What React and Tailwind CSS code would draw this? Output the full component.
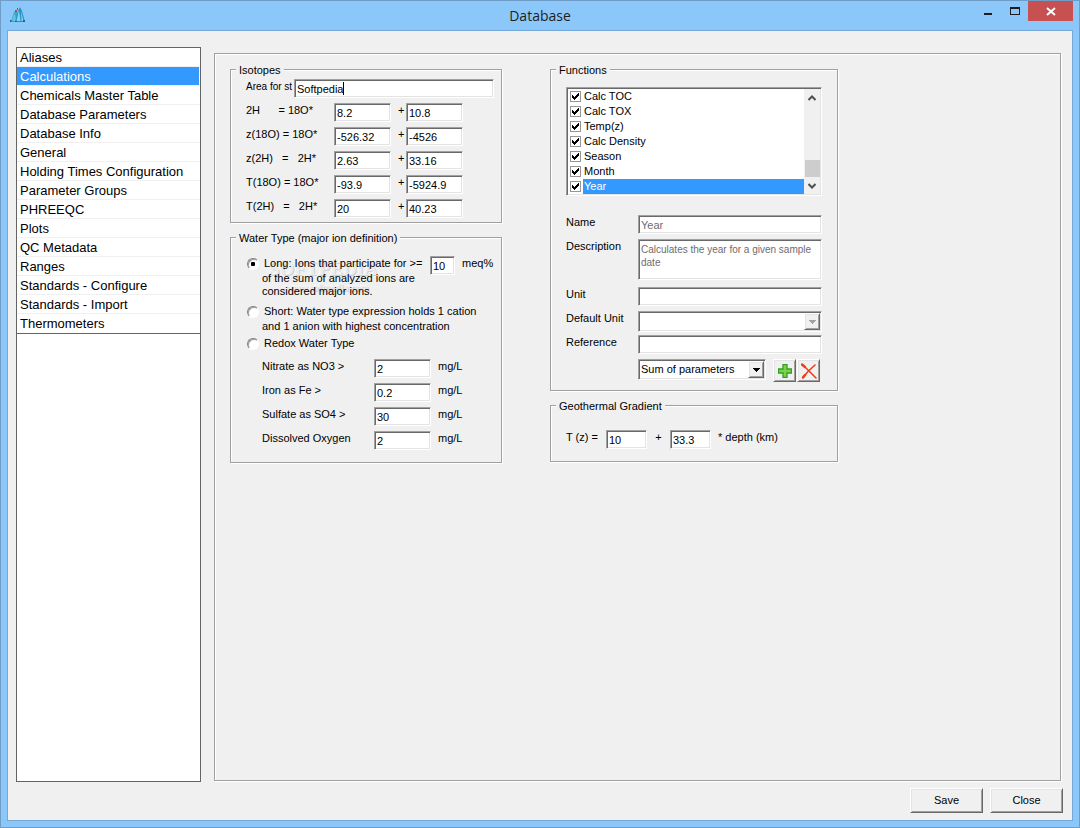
import { useState } from 'react';

const SUNKEN =
  'border border-t-[#a0a0a0] border-l-[#a0a0a0] border-r-white border-b-white bg-white shadow-[inset_1px_1px_0_#696969,inset_-1px_-1px_0_#e3e3e3]';
const RAISED =
  'border border-t-white border-l-white border-r-[#696969] border-b-[#696969] bg-[#f0f0f0] shadow-[inset_1px_1px_0_#e3e3e3,inset_-1px_-1px_0_#a0a0a0]';

const sections = [
  'Aliases',
  'Calculations',
  'Chemicals Master Table',
  'Database Parameters',
  'Database Info',
  'General',
  'Holding Times Configuration',
  'Parameter Groups',
  'PHREEQC',
  'Plots',
  'QC Metadata',
  'Ranges',
  'Standards - Configure',
  'Standards - Import',
  'Thermometers',
];

const isotopes = [
  { id: 'h2', label: '2H      = 18O*', factor: '8.2', offset: '10.8' },
  { id: 'z18o', label: 'z(18O) = 18O*', factor: '-526.32', offset: '-4526' },
  { id: 'z2h', label: 'z(2H)   =   2H*', factor: '2.63', offset: '33.16' },
  { id: 't18o', label: 'T(18O) = 18O*', factor: '-93.9', offset: '-5924.9' },
  { id: 't2h', label: 'T(2H)   =   2H*', factor: '20', offset: '40.23' },
];

const redox = [
  { id: 'nitrate', label: 'Nitrate as NO3 >', value: '2' },
  { id: 'iron', label: 'Iron as Fe >', value: '0.2' },
  { id: 'sulfate', label: 'Sulfate as SO4 >', value: '30' },
  { id: 'oxygen', label: 'Dissolved Oxygen', value: '2' },
];

const functionNames = ['Calc TOC', 'Calc TOX', 'Temp(z)', 'Calc Density', 'Season', 'Month', 'Year'];

function Group({ title, children, className = '' }) {
  return (
    <fieldset
      className={`min-w-0 border border-[#a0a0a0] px-[15px] shadow-[1px_1px_0_#fff,inset_1px_1px_0_#fff] ${className}`}
    >
      <legend className="-ml-[10px] bg-[#f0f0f0] px-[3px] pt-[2px] leading-[13px]">{title}</legend>
      {children}
    </fieldset>
  );
}

function Field({ className = '', ...props }) {
  return (
    <input
      type="text"
      className={`h-[19px] min-w-0 px-[2px] leading-[13px] outline-none disabled:text-[#6d6d6d] ${SUNKEN} ${className}`}
      {...props}
    />
  );
}

function Combo({ id, label, options = [], disabled, className = '' }) {
  return (
    <div className={`relative h-[21px] ${className}`}>
      <select
        id={id}
        aria-label={label}
        disabled={disabled}
        className={`h-full w-full appearance-none px-[2px] leading-[13px] outline-none ${SUNKEN}`}
      >
        {options.map((o) => (
          <option key={o}>{o}</option>
        ))}
      </select>
      <span
        className={`pointer-events-none absolute top-[2px] right-[2px] flex h-[17px] w-4 items-center justify-center ${RAISED}`}
      >
        <svg width="7" height="4" viewBox="0 0 7 4" shapeRendering="crispEdges" fill={disabled ? '#a0a0a0' : '#000'}>
          <path d="M0 0h7v1H0zM1 1h5v1H1zM2 2h3v1H2zM3 3h1v1H3z" />
        </svg>
      </span>
    </div>
  );
}

function Radio({ id, checked, onChange }) {
  return (
    <span className="relative h-3 w-3 shrink-0">
      <input
        type="radio"
        id={id}
        name="waterType"
        checked={checked}
        onChange={onChange}
        className="block h-3 w-3 appearance-none rounded-full border border-t-[#808080] border-l-[#808080] border-r-white border-b-white bg-white shadow-[inset_1px_1px_0_#a0a0a0]"
      />
      {checked && <span className="pointer-events-none absolute top-1 left-1 h-1 w-1 rounded-[1px] bg-black" />}
    </span>
  );
}

function TitleBar() {
  return (
    <header className="relative flex h-[29px] shrink-0 items-start justify-between">
      <svg width="16" height="16" viewBox="0 0 16 16" className="mt-[6px] ml-[9px]" aria-hidden="true">
        <path d="M1 15 4 5l3-2 2 12z" fill="#3fa3cf" />
        <path d="M2 14 4.500 6l2 8z" fill="#63c3e2" />
        <path d="M5 15 8 4l2-4 2 4 3 11z" fill="#2a8fc4" />
        <path d="M6.500 14 9 3l1.500 11zM11 4l2.500 10h-2z" fill="#7fd8f2" />
        <path d="M0 13h2l-1 2H0zM13 13h2v2h-2zM5 14h2v1H5z" fill="#176a94" />
        <path d="M5 3h2v2H5zM7 1h1v2H7z" fill="#b8464e" />
      </svg>
      <h1 className="pointer-events-none absolute inset-x-0 top-[5px] text-center font-['Open_Sans',sans-serif] text-[14px] leading-5 text-[#1e1e1e]">
        Database
      </h1>
      <div className="flex items-start">
        <button type="button" aria-label="Minimize" className="h-5 w-7">
          <svg width="28" height="20" shapeRendering="crispEdges">
            <path d="M11 12h8v2h-8z" fill="#1e1e1e" />
          </svg>
        </button>
        <button type="button" aria-label="Maximize" className="h-5 w-[27px]">
          <svg width="27" height="20" shapeRendering="crispEdges" fill="#1e1e1e">
            <path fillRule="evenodd" d="M9 6h10v8H9zM10 8v5h8V8z" />
          </svg>
        </button>
        <button type="button" aria-label="Close window" className="mr-[6px] h-5 w-[45px] bg-[#c75050]">
          <svg width="45" height="20" viewBox="0 0 45 20">
            <path d="M19 7l8 7M27 7l-8 7" stroke="#fff" strokeWidth="2" fill="none" />
          </svg>
        </button>
      </div>
    </header>
  );
}

function Sidebar({ current, onSelect }) {
  return (
    <nav className="w-[185px] shrink-0 border border-[#646464] bg-white text-[13px] leading-5">
      <ul className="border-b border-[#646464]">
        {sections.map((name) => (
          <li key={name} className="h-[19px] border-b border-[#f0f0f0] pr-px last:border-white">
            <button
              type="button"
              onClick={() => onSelect(name)}
              className={`flex h-[18px] w-full items-start px-[3px] text-left whitespace-nowrap ${
                name === current ? 'bg-[#3399ff] text-white' : 'text-black'
              }`}
            >
              {name}
            </button>
          </li>
        ))}
      </ul>
    </nav>
  );
}

function IsotopesGroup() {
  return (
    <Group title="Isotopes" className="pb-1">
      <div className="mt-[2px] mr-[-8px] flex items-start">
        <label htmlFor="area" className="w-12 shrink-0 text-[10px] whitespace-nowrap">
          Area for st
        </label>
        <div className="relative flex flex-1">
          <Field id="area" defaultValue="Softpedia" className="flex-1" />
          <span className="pointer-events-none absolute top-[3px] left-[49px] h-[13px] w-px bg-black" />
        </div>
      </div>
      <div className="mt-[5px] flex flex-col gap-[5px]">
        {isotopes.map((row) => (
          <div key={row.id} className="flex items-start">
            <label htmlFor={`${row.id}-factor`} className="w-[88px] whitespace-pre">
              {row.label}
            </label>
            <Field id={`${row.id}-factor`} defaultValue={row.factor} className="w-[57px]" />
            <label htmlFor={`${row.id}-offset`} className="w-[15px] pl-[7px]">
              +
            </label>
            <Field id={`${row.id}-offset`} defaultValue={row.offset} className="w-[57px]" />
          </div>
        ))}
      </div>
    </Group>
  );
}

function WaterTypeGroup() {
  const [type, setType] = useState('long');

  return (
    <Group title="Water Type (major ion definition)" className="relative flex-1 pb-3">
      <div
        aria-hidden="true"
        className="pointer-events-none absolute top-[14px] left-[38px] text-center font-['Liberation_Serif',serif] font-bold text-[#ececec] [text-shadow:1px_1px_0_#d0d0d0,-1px_-1px_0_#fafafa]"
      >
        <div className="text-[19px] leading-5">
          SOFTPEDIA<span className="align-super text-[8px] leading-none">™</span>
        </div>
        <div className="pt-[3px] text-[10px] leading-3">www.softpedia.com</div>
      </div>

      <div className="relative mt-[11px] flex items-start">
        <div className="w-[184px] shrink-0 pl-px">
          <div className="flex items-center gap-[5px]">
            <Radio id="wt-long" checked={type === 'long'} onChange={() => setType('long')} />
            <label htmlFor="wt-long" className="whitespace-nowrap">
              Long: Ions that participate for &gt;=
            </label>
          </div>
          <label htmlFor="wt-long" className="mt-px block pl-[15px] leading-[13px]">
            of the sum of analyzed ions are
            <br />
            considered major ions.
          </label>
        </div>
        <Field aria-label="Major ion threshold" defaultValue="10" className="w-[25px] shrink-0" />
        <span className="ml-[7px]">meq%</span>
      </div>

      <div className="relative mt-[6px] pl-px">
        <div className="flex items-center gap-[5px]">
          <Radio id="wt-short" checked={type === 'short'} onChange={() => setType('short')} />
          <label htmlFor="wt-short" className="whitespace-nowrap">
            Short: Water type expression holds 1 cation
          </label>
        </div>
        <label htmlFor="wt-short" className="mt-px block pl-[15px] leading-[13px] whitespace-nowrap">
          and 1 anion with highest concentration
        </label>
        <div className="mt-[3px] flex items-center gap-[5px]">
          <Radio id="wt-redox" checked={type === 'redox'} onChange={() => setType('redox')} />
          <label htmlFor="wt-redox">Redox Water Type</label>
        </div>
      </div>

      <div className="mt-2 flex flex-col gap-[5px] pl-4">
        {redox.map((row) => (
          <div key={row.id} className="flex items-start">
            <label htmlFor={row.id} className="w-28">
              {row.label}
            </label>
            <Field id={row.id} defaultValue={row.value} className="w-[57px]" />
            <span className="ml-[7px]">mg/L</span>
          </div>
        ))}
      </div>
    </Group>
  );
}

function FunctionList() {
  const [checked, setChecked] = useState(functionNames);

  const toggle = (name) => {
    setChecked(checked.includes(name) ? checked.filter((n) => n !== name) : [...checked, name]);
  };

  return (
    <div className={`flex p-px ${SUNKEN}`}>
      <ul className="flex-1">
        {functionNames.map((name) => (
          <li key={name} className="flex h-[15px] items-center gap-[2px] pl-[2px]">
            <span className="relative h-[11px] w-[11px] shrink-0">
              <input
                type="checkbox"
                id={`fn-${name}`}
                checked={checked.includes(name)}
                onChange={() => toggle(name)}
                className="block h-[11px] w-[11px] appearance-none border border-[#969696] bg-white"
              />
              {checked.includes(name) && (
                <svg
                  width="7"
                  height="7"
                  viewBox="0 0 7 7"
                  shapeRendering="crispEdges"
                  className="pointer-events-none absolute top-[2px] left-[2px]"
                >
                  <path d="M0 2h1v1h1v1h1V3h1V2h1V1h1V0h1v3H6v1H5v1H4v1H3v1H2V6H1V5H0z" />
                </svg>
              )}
            </span>
            <label
              htmlFor={`fn-${name}`}
              className={`h-[15px] flex-1 pl-px ${name === 'Year' ? 'bg-[#3399ff] text-white' : ''}`}
            >
              {name}
            </label>
          </li>
        ))}
      </ul>
      <div className="flex w-4 flex-col items-center bg-[#f0f0f0]">
        <button type="button" aria-label="Scroll up" className="flex h-[18px] w-full items-center justify-center">
          <svg width="8" height="6" viewBox="0 0 8 6" fill="none" stroke="#505050" strokeWidth="2">
            <path d="M.5 5 4 1.500 7.500 5" />
          </svg>
        </button>
        <div className="mt-auto h-[17px] w-[15px] bg-[#cdcdcd]" />
        <button type="button" aria-label="Scroll down" className="flex h-[17px] w-full items-center justify-center">
          <svg width="8" height="6" viewBox="0 0 8 6" fill="none" stroke="#505050" strokeWidth="2">
            <path d="M.5 1 4 4.500 7.500 1" />
          </svg>
        </button>
      </div>
    </div>
  );
}

function FunctionsGroup() {
  return (
    <Group title="Functions" className="pt-[10px] pb-2">
      <FunctionList />
      <div className="mt-[19px] grid grid-cols-[72px_1fr] grid-rows-[24px_48px_24px_24px_24px_auto] items-start">
        <label htmlFor="fn-name">Name</label>
        <Field id="fn-name" defaultValue="Year" disabled />

        <label htmlFor="fn-description">Description</label>
        <textarea
          id="fn-description"
          disabled
          defaultValue="Calculates the year for a given sample date"
          className={`block h-[41px] w-full resize-none overflow-hidden py-[3px] pr-0 pl-[2px] text-[10px] leading-[13px] text-[#6d6d6d] ${SUNKEN}`}
        />

        <label htmlFor="fn-unit">Unit</label>
        <Field id="fn-unit" />

        <label htmlFor="fn-default-unit">Default Unit</label>
        <Combo id="fn-default-unit" disabled />

        <label htmlFor="fn-reference">Reference</label>
        <Field id="fn-reference" />

        <div className="col-start-2 flex items-start">
          <Combo label="Function type" options={['Sum of parameters']} className="w-32" />
          <button
            type="button"
            aria-label="Add function"
            className={`ml-[7px] flex h-[23px] w-[23px] items-center justify-center ${RAISED}`}
          >
            <svg width="14" height="14" viewBox="0 0 14 14">
              <path
                d="M5 .5h4V5h4.500v4H9v4.500H5V9H.5V5H5z"
                fill="#7fd04f"
                stroke="#2ea31c"
                strokeWidth="1.300"
              />
            </svg>
          </button>
          <button
            type="button"
            aria-label="Delete function"
            className={`ml-px flex h-[23px] w-[23px] items-center justify-center ${RAISED}`}
          >
            <svg width="16" height="16" viewBox="0 0 16 16" fill="none" stroke="#ee3f1c" strokeLinecap="round">
              <path d="M1 1.500 6 6l9 9" strokeWidth="1.600" />
              <path d="M14 2 7 8.500l-5 6" strokeWidth="1.600" />
              <path d="M1 1.500 4 4M4 12l-2 2.500" strokeWidth="2.400" />
            </svg>
          </button>
        </div>
      </div>
    </Group>
  );
}

function GeothermalGroup() {
  return (
    <Group title="Geothermal Gradient" className="flex-1 pb-3">
      <div className="mt-[17px] flex items-start">
        <label htmlFor="geo-base" className="w-10">
          T (z) =
        </label>
        <Field id="geo-base" defaultValue="10" className="w-[41px]" />
        <label htmlFor="geo-gradient" className="w-[23px] text-center">
          +
        </label>
        <Field id="geo-gradient" defaultValue="33.3" className="w-[41px]" />
        <span className="ml-[7px]">* depth (km)</span>
      </div>
    </Group>
  );
}

export default function App() {
  const [section, setSection] = useState('Calculations');

  return (
    <div className="flex min-h-screen flex-col border border-[#6f9dc8] bg-[#8cc7fa] font-['Liberation_Sans',sans-serif] text-[11px] leading-[15px] text-black">
      <TitleBar />
      <div className="mx-[6px] mb-[6px] flex flex-1 flex-col border border-[#76a8d8] bg-[#f0f0f0]">
        <main className="flex flex-1 pt-4 pr-[11px] pl-2">
          <Sidebar current={section} onSelect={setSection} />
          <section className="mt-[6px] mb-px ml-[13px] flex flex-1 items-start gap-12 border border-[#a0a0a0] px-[15px] pt-2 shadow-[1px_1px_0_#fff,inset_1px_1px_0_#fff]">
            <div className="flex w-[272px] flex-col gap-[7px]">
              <IsotopesGroup />
              <WaterTypeGroup />
            </div>
            <div className="flex w-72 flex-col gap-[7px]">
              <FunctionsGroup />
              <GeothermalGroup />
            </div>
          </section>
        </main>
        <footer className="flex justify-end gap-[7px] pt-[6px] pr-[9px] pb-[7px]">
          <button type="button" className={`h-[25px] w-[73px] ${RAISED}`}>
            Save
          </button>
          <button type="button" className={`h-[25px] w-[73px] ${RAISED}`}>
            Close
          </button>
        </footer>
      </div>
    </div>
  );
}
